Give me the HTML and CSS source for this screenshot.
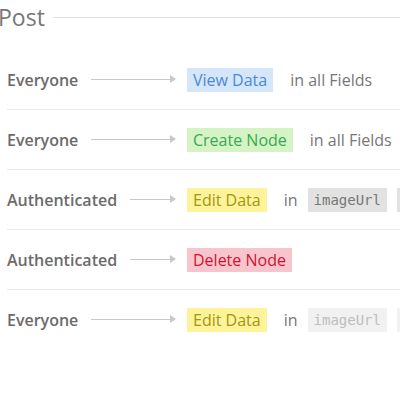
FILE: index.html
```html
<!DOCTYPE html>
<html>
<head>
<meta charset="utf-8">
<link rel="stylesheet" href="styles.css">
</head>
<body>
<div class="panel">
  <div class="title-row">
    <span class="title">Post</span>
    <span class="title-line"></span>
  </div>
  <div class="rules">
    <div class="rule">
      <div class="who"><span class="label">Everyone</span><span class="arrow"></span></div>
      <span class="badge view">View Data</span>
      <span class="scope">in all Fields</span>
    </div>
    <div class="rule">
      <div class="who"><span class="label">Everyone</span><span class="arrow"></span></div>
      <span class="badge create">Create Node</span>
      <span class="scope">in all Fields</span>
    </div>
    <div class="rule">
      <div class="who"><span class="label">Authenticated</span><span class="arrow"></span></div>
      <span class="badge edit">Edit Data</span>
      <span class="scope">in</span>
      <span class="field">imageUrl</span>
      <span class="field">title</span>
    </div>
    <div class="rule">
      <div class="who"><span class="label">Authenticated</span><span class="arrow"></span></div>
      <span class="badge delete">Delete Node</span>
    </div>
    <div class="rule">
      <div class="who"><span class="label">Everyone</span><span class="arrow"></span></div>
      <span class="badge edit">Edit Data</span>
      <span class="scope">in</span>
      <span class="field muted">imageUrl</span>
      <span class="field muted">title</span>
    </div>
  </div>
</div>
</body>
</html>
```

FILE: styles.css
```css
html, body {
  margin: 0;
  padding: 0;
  background: #fff;
  overflow: hidden;
}
body {
  font-family: "Open Sans", "Liberation Sans", sans-serif;
  width: 400px;
  height: 400px;
}
.panel {
  width: 400px;
  overflow: hidden;
}
.title-row {
  display: flex;
  align-items: center;
  height: 34px;
  margin-left: -2px;
}
.title {
  font-size: 23px;
  font-weight: 400;
  color: #777;
  line-height: 34px;
  white-space: nowrap;
}
.title-line {
  flex: 1;
  height: 1px;
  background: #e3e3e3;
  margin-left: 8px;
}
.rules {
  margin-top: 16px;
  margin-left: 7px;
}
.rule {
  display: flex;
  align-items: center;
  height: 59px;
  border-bottom: 1px solid #ebebeb;
  white-space: nowrap;
  width: 500px;
}
.rule:last-child {
  border-bottom: none;
}
.who {
  display: flex;
  align-items: center;
  width: 169px;
  flex: none;
}
.label {
  font-size: 16px;
  font-weight: 600;
  color: #6b6b6b;
}
.arrow {
  flex: 1;
  height: 1px;
  background: #c8c8c8;
  margin-left: 13px;
  margin-right: 6px;
  position: relative;
}
.arrow::after {
  content: "";
  position: absolute;
  right: -6px;
  top: -4px;
  border-left: 6px solid #c8c8c8;
  border-top: 4.5px solid transparent;
  border-bottom: 4.5px solid transparent;
}
.badge {
  margin-left: 11px;
  font-size: 16px;
  line-height: 24px;
  height: 24px;
  padding: 0 6px;
}
.view { background: #d6e6f9; color: #4a88d8; }
.create { background: #d5f3c3; color: #37a957; }
.edit { background: #fcf39b; color: #a6950f; }
.delete { background: #f8c5cd; color: #d11232; }
.scope {
  margin-left: 17px;
  font-size: 16px;
  color: #777;
}
.field {
  margin-left: 10px;
  font-family: "DejaVu Sans Mono", "Liberation Mono", monospace;
  font-size: 14px;
  line-height: 24px;
  height: 24px;
  padding: 0 6px;
  background: #e2e2e2;
  color: #777;
}
.field.muted {
  background: #f1f1f1;
  color: #bdbdbd;
}
```
